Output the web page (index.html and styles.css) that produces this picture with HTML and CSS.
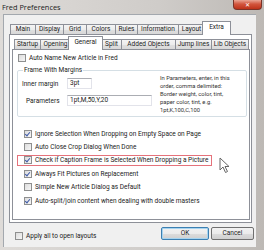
FILE: index.html
```html
<!DOCTYPE html>
<html lang="en">
<head>
    <meta charset="UTF-8">
    <title>Fred Preferences</title>
    <link rel="stylesheet" href="styles.css">
</head>
<body>
    <div class="window">
        <div class="titlebar">
            <span class="title">Fred Preferences</span>
            <div class="close">&#x2715;</div>
        </div>

        <div class="client">
            <div class="outer-tabs">
                <div class="tabrow">
                    <div class="tab t-main">Main</div>
                    <div class="tab t-display">Display</div>
                    <div class="tab t-grid">Grid</div>
                    <div class="tab t-colors">Colors</div>
                    <div class="tab t-rules">Rules</div>
                    <div class="tab t-info">Information</div>
                    <div class="tab t-layout">Layout</div>
                    <div class="tab selected t-extra">Extra</div>
                </div>

                <div class="outer-panel">
                    <div class="tabrow inner-row">
                        <div class="tab t-startup">Startup</div>
                        <div class="tab t-opening">Opening</div>
                        <div class="tab selected t-general">General</div>
                        <div class="tab t-split">Split</div>
                        <div class="tab t-added">Added Objects</div>
                        <div class="tab t-jump">Jump lines</div>
                        <div class="tab t-lib">Lib Objects</div>
                    </div>

                    <div class="inner-panel">
                        <div class="option first">
                            <span class="box"></span>
                            <span>Auto Name New Article in Fred</span>
                        </div>

                        <fieldset class="group">
                            <legend>Frame With Margins</legend>
                            <div class="group-body">
                                <div class="fields">
                                    <div class="field">
                                        <span class="field-label">Inner margin</span>
                                        <span class="input short">3pt</span>
                                    </div>
                                    <div class="field">
                                        <span class="field-label indent">Parameters</span>
                                        <span class="input long">1pt,M,50,Y,20</span>
                                    </div>
                                </div>
                                <div class="note">In Parameters, enter, in this order, comma delimited: Border weight, color, tint, paper color, tint, e.g. 1pt,K,100,C,100</div>
                            </div>
                        </fieldset>

                        <div class="options">
                            <div class="option"><span class="box checked"></span><span>Ignore Selection When Dropping on Empty Space on Page</span></div>
                            <div class="option"><span class="box"></span><span>Auto Close Crop Dialog When Done</span></div>
                            <div class="option highlight"><span class="box checked"></span><span>Check if Caption Frame is Selected When Dropping a Picture</span></div>
                            <div class="option"><span class="box checked"></span><span>Always Fit Pictures on Replacement</span></div>
                            <div class="option"><span class="box"></span><span>Simple New Article Dialog as Default</span></div>
                            <div class="option"><span class="box checked"></span><span>Auto-split/join content when dealing with double masters</span></div>
                        </div>
                    </div>
                </div>
            </div>

            <div class="footer">
                <div class="option apply"><span class="box"></span><span>Apply all to open layouts</span></div>
                <div class="buttons">
                    <div class="btn default">OK</div>
                    <div class="btn cancel">Cancel</div>
                </div>
            </div>
        </div>

        <!-- mouse pointer sitting over the dialog -->
        <svg class="cursor" width="12" height="17" viewBox="0 0 12 17">
            <path d="M1 1 L1 13 L4 10 L6.5 15.5 L8.5 14.5 L6 9.5 L10 9.5 Z" fill="#fff" stroke="#666" stroke-width="1" stroke-linejoin="round"/>
        </svg>
    </div>
</body>
</html>
```

FILE: styles.css
```css
body {
    margin: 0;
    font-family: 'Roboto', 'Open Sans', sans-serif;
    font-size: 6.5px;
    color: #222;
}

.window {
    position: relative;
    width: 264px;
    height: 250px;
    overflow: hidden;
    display: flex;
    flex-direction: column;
    background: linear-gradient(90deg, #dedbd8, #cfccc9 60%, #bdb9b5);
}

.titlebar {
    height: 14px;
    display: flex;
    align-items: flex-start;
}

.title {
    font-family: 'Open Sans', sans-serif;
    font-size: 7.4px;
    line-height: 10px;
    margin: 2px 0 0 2px;
    color: #1a1a1a;
}

.close {
    margin-left: auto;
    margin-right: 2px;
    width: 29px;
    height: 10px;
    box-sizing: border-box;
    border: 1px solid #7a3328;
    border-top: none;
    border-radius: 0 0 4px 4px;
    background: linear-gradient(#e9a594, #d2553d 45%, #bd3219);
    color: #fff;
    font-size: 6px;
    line-height: 9px;
    text-align: center;
}

.client {
    box-sizing: border-box;
    margin-left: 3px;
    width: 253px;
    height: 233px;
    border: 1px solid #a3a8ae;
    border-right: none;
    border-bottom: none;
    background: #f0f0f0;
    padding: 6px 0 0 5px;
}

/* tab strips */
.tabrow {
    display: flex;
    align-items: flex-end;
    height: 13px;
    padding-left: 1px;
}

.inner-row {
    padding-left: 2px;
}

.tab {
    flex: none;
    box-sizing: border-box;
    height: 10px;
    margin-right: -1px;
    border: 1px solid #8d9098;
    border-bottom: none;
    background: linear-gradient(#f4f4f4, #ececec 50%, #e0e0e0 50%, #d8d8d8);
    line-height: 9px;
    text-align: center;
    white-space: nowrap;
}

.tab.selected {
    position: relative;
    z-index: 1;
    height: 14px;
    margin: 0 -2px -1px -2px;
    background: #fff;
    line-height: 11px;
}

.t-main { width: 26px; }
.t-display { width: 29px; }
.t-grid { width: 24px; }
.t-colors { width: 30px; }
.t-rules { width: 23px; }
.t-info { width: 42px; }
.t-layout { width: 27px; }
.t-extra { width: 29px; }

.t-startup { width: 27px; }
.t-opening { width: 31px; }
.t-general { width: 35px; }
.t-split { width: 21px; }
.t-added { width: 55px; }
.t-jump { width: 37px; }
.t-lib { width: 38px; }

.outer-tabs {
    width: 243px;
}

.outer-panel {
    box-sizing: border-box;
    height: 189px;
    border: 1px solid #8d9098;
    background: #fff;
    padding: 1px 0 0 2px;
}

.inner-panel {
    box-sizing: border-box;
    width: 238px;
    height: 171px;
    border: 1px solid #8d9098;
    background: #fff;
    padding: 0 2px 0 3px;
}

/* checkboxes */
.option {
    display: flex;
    align-items: center;
    gap: 3px;
    white-space: nowrap;
}

.box {
    flex: none;
    width: 8px;
    height: 8px;
    box-sizing: border-box;
    border: 1px solid #8e8f8f;
    background: linear-gradient(135deg, #dcdcdc, #f6f6f6);
    position: relative;
}

.box.checked::after {
    content: "";
    position: absolute;
    left: 1px;
    top: 0;
    width: 2px;
    height: 4px;
    border: solid #3e5aa8;
    border-width: 0 1.5px 1.5px 0;
    transform: rotate(40deg);
}

.option.first {
    height: 10px;
    margin: 3px 0 0 2px;
}

/* group box */
.group {
    margin: 3px 0 0 1px;
    padding: 0 0 4px 4px;
    width: 230px;
    box-sizing: border-box;
    height: 51px;
    border: 1px solid #d5dfe5;
    border-radius: 2px;
}

.group legend {
    padding: 0 1px;
    margin-left: 1px;
    line-height: 9px;
}

.group-body {
    display: flex;
    align-items: flex-start;
}

.fields {
    width: 137px;
}

.field {
    display: flex;
    align-items: center;
    height: 11px;
    margin-top: 3px;
}

.field + .field {
    margin-top: 6px;
}

.field-label {
    width: 45px;
}

.field-label.indent {
    padding-left: 4px;
    width: 41px;
}

.input {
    box-sizing: border-box;
    height: 11px;
    border: 1px solid #e2e3ea;
    border-top-color: #abadb3;
    padding-left: 2px;
    line-height: 9px;
    background: #fff;
}

.input.short {
    width: 25px;
}

.input.long {
    width: 85px;
}

.note {
    font-size: 5.8px;
    line-height: 7.9px;
    width: 73px;
    margin-left: 1px;
    color: #333;
}

.options {
    margin-top: 10px;
    padding-left: 1px;
}

.options .option {
    height: 13.4px;
    box-sizing: border-box;
    border: 1px solid transparent;
    padding: 0 3px 0 6px;
    width: fit-content;
}

.options .option.highlight {
    height: 11px;
    margin: 1px 0 1.4px;
    border-color: #e5727b;
}

/* bottom of the dialog */
.footer {
    display: flex;
    justify-content: space-between;
    padding: 4px 2px 0 6px;
}

.option.apply {
    margin-top: 5px;
    height: 8px;
}

.buttons {
    display: flex;
    gap: 2px;
}

.btn {
    box-sizing: border-box;
    height: 13px;
    border: 1px solid #707070;
    border-radius: 2px;
    background: linear-gradient(#f2f2f2, #ebebeb 50%, #dddddd 50%, #cfcfcf);
    text-align: center;
    line-height: 11px;
}

.btn.default {
    width: 48px;
    border-color: #3c7fb1;
    box-shadow: inset 0 0 0 1px #a6d4f0;
}

.btn.cancel {
    width: 43px;
}

.cursor {
    position: absolute;
    left: 219px;
    top: 157px;
}
```
